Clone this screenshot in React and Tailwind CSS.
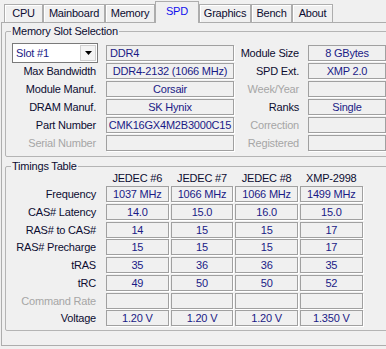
const tabs = [
  { name: 'CPU', w: 'w-[39px]' },
  { name: 'Mainboard', w: 'w-[62px]' },
  { name: 'Memory', w: 'w-[50px]' },
  { name: 'SPD', w: 'w-[44px]', active: true },
  { name: 'Graphics', w: 'w-[52px]' },
  { name: 'Bench', w: 'w-[41px]' },
  { name: 'About', w: 'w-[41px]' },
]

const slotRows = [
  { label: 'Max Bandwidth', value: 'DDR4-2132 (1066 MHz)', rLabel: 'SPD Ext.', rValue: 'XMP 2.0' },
  { label: 'Module Manuf.', value: 'Corsair', rLabel: 'Week/Year', rValue: '', rDim: true },
  { label: 'DRAM Manuf.', value: 'SK Hynix', rLabel: 'Ranks', rValue: 'Single' },
  { label: 'Part Number', value: 'CMK16GX4M2B3000C15', rLabel: 'Correction', rValue: '', rDim: true },
  { label: 'Serial Number', value: '', dim: true, rLabel: 'Registered', rValue: '', rDim: true },
]

const columns = ['JEDEC #6', 'JEDEC #7', 'JEDEC #8', 'XMP-2998']

const timings = [
  { label: 'Frequency', values: ['1037 MHz', '1066 MHz', '1066 MHz', '1499 MHz'] },
  { label: 'CAS# Latency', values: ['14.0', '15.0', '16.0', '15.0'] },
  { label: 'RAS# to CAS#', values: ['14', '15', '15', '17'] },
  { label: 'RAS# Precharge', values: ['15', '15', '15', '17'] },
  { label: 'tRAS', values: ['35', '36', '36', '35'] },
  { label: 'tRC', values: ['49', '50', '50', '52'] },
  { label: 'Command Rate', values: ['', '', '', ''], dim: true },
  { label: 'Voltage', values: ['1.20 V', '1.20 V', '1.20 V', '1.350 V'] },
]

function Field({ children, className = '' }) {
  return (
    <div
      className={`h-[16px] border border-[#a0a0a0] bg-[#f0f0f0] text-[#1a1a86] leading-[14px] whitespace-nowrap overflow-hidden shadow-[1px_1px_0_#ffffff] ${className}`}
    >
      {children}
    </div>
  )
}

function Label({ children, dim, className = '' }) {
  return (
    <div className={`text-right whitespace-nowrap leading-[16px] ${dim ? 'text-[#a6a6a6]' : 'text-[#0c0c30]'} ${className}`}>
      {children}
    </div>
  )
}

function Group({ title, className = '', children }) {
  return (
    <fieldset className={`w-[400px] ml-[3px] border border-[#b4b4b4] rounded-[2px] p-0 ${className}`}>
      <legend className="ml-[5px] px-[1px] leading-[13px] text-[#0c0c30]">{title}</legend>
      {children}
    </fieldset>
  )
}

export default function App() {
  return (
    <div
      className="w-[386px] h-[349px] overflow-hidden bg-[#f0f0f0] text-[11px] tracking-[-0.2px] select-none"
      style={{ fontFamily: '"Liberation Sans", Arial, sans-serif' }}
    >
      {/* tab strip */}
      <div className="h-[22px] flex items-end pl-[4px] relative z-10">
        {tabs.map((t) =>
          t.active ? (
            <div
              key={t.name}
              className={`${t.w} h-[22px] mb-[-1px] border border-b-0 border-[#adadad] bg-[#f0f0f0] text-center pt-[2px] leading-[15px] text-[#1010ee]`}
            >
              {t.name}
            </div>
          ) : (
            <div
              key={t.name}
              className={`${t.w} h-[18px] border border-b-0 border-[#adadad] bg-[#f0f0f0] shadow-[inset_1px_1px_0_#ffffff] text-center leading-[17px] text-[#0c0c30]`}
            >
              {t.name}
            </div>
          ),
        )}
      </div>

      {/* tab page */}
      <div className="ml-[1px] w-[420px] h-[324px] border border-[#adadad] bg-[#f0f0f0] pt-[2px]">
        <Group title="Memory Slot Selection" className="pb-[5px]">
          <div className="pt-[5px] flex flex-col">
            <div className="h-[20px] flex items-center">
              <div className="ml-[6px] w-[86px] h-[20px] border border-[#7a7a7a] bg-white flex items-center">
                <span className="flex-1 pl-[3px] leading-[18px] text-[#1a1a86]">Slot #1</span>
                <div className="w-[16px] h-[16px] mr-[1px] bg-[#f4f4f4] border border-[#d0d0d0] flex items-center justify-center">
                  <svg width="7" height="4" viewBox="0 0 7 4">
                    <path d="M0 0h7L3.5 4z" fill="#000" />
                  </svg>
                </div>
              </div>
              <Field className="ml-[8px] w-[128px] pl-[3px]">DDR4</Field>
              <Label className="w-[65px]">Module Size</Label>
              <Field className="ml-[9px] w-[78px] text-center">8 GBytes</Field>
            </div>
            {slotRows.map((r, i) => (
              <div key={r.label} className={`h-[16px] flex items-center ${i === 0 ? '' : 'mt-[2px]'}`}>
                <Label dim={r.dim} className="ml-[0px] w-[90px]">{r.label}</Label>
                <Field className="ml-[10px] w-[128px] text-center">{r.value}</Field>
                <Label dim={r.rDim} className="w-[65px]">{r.rLabel}</Label>
                <Field className="ml-[9px] w-[78px] text-center">{r.rValue}</Field>
              </div>
            ))}
          </div>
        </Group>

        <Group title="Timings Table" className="mt-[3px] pb-[4px]">
          <div className="flex flex-col">
            <div className="h-[13px] flex">
              <div className="w-[90px]" />
              <div className="ml-[10px] grid grid-cols-[repeat(4,62.67px)] gap-x-[2px]">
                {columns.map((c) => (
                  <div key={c} className="text-center leading-[11px] text-[#0c0c30] whitespace-nowrap">
                    {c}
                  </div>
                ))}
              </div>
            </div>
            <div className="flex flex-col gap-y-[1.75px]">
              {timings.map((r) => (
                <div key={r.label} className="h-[16px] flex items-center">
                  <Label dim={r.dim} className="w-[90px]">{r.label}</Label>
                  <div className="ml-[10px] grid grid-cols-[repeat(4,62.67px)] gap-x-[2px]">
                    {r.values.map((v, j) => (
                      <Field key={j} className="text-center">{v}</Field>
                    ))}
                  </div>
                </div>
              ))}
            </div>
          </div>
        </Group>
      </div>
    </div>
  )
}
